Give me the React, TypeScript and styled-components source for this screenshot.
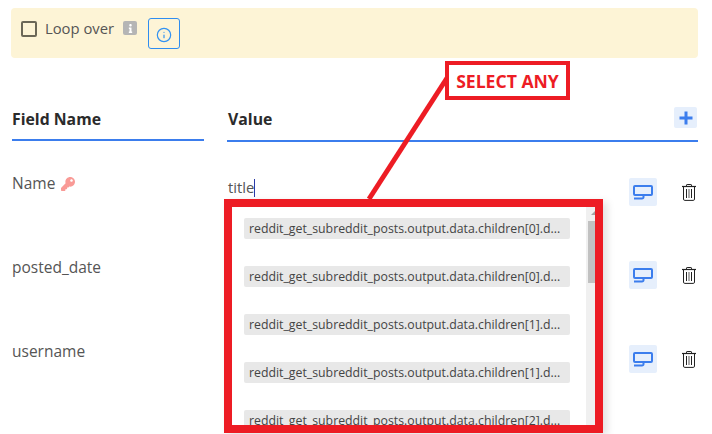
import React from "react";
import styled, { createGlobalStyle } from "styled-components";
import { Info } from "lucide-react";
import { FaKey, FaInfo } from "react-icons/fa";

const RED = "#ed1c24";
const BLUE = "#3b7ded";

const Global = createGlobalStyle`
  html, body { margin: 0; padding: 0; background: #fff; overflow: hidden; }
  body { width: 712px; height: 434px; font-family: "Open Sans", "Noto Sans", sans-serif; color: #444; }
`;

const Page = styled.div`
  position: relative;
  width: 712px;
  height: 434px;
  padding: 8px 14px 0 11px;
  box-sizing: border-box;
  overflow: hidden;
`;

const Banner = styled.div`
  height: 50px;
  background: #fdf4d6;
  border-radius: 4px;
  display: flex;
  align-items: flex-start;
  padding: 10px 0 0 10px;
  box-sizing: border-box;
`;

const CheckBox = styled.span`
  width: 16px;
  height: 16px;
  box-sizing: border-box;
  border: 2px solid #6b6757;
  border-radius: 2px;
  margin-top: 3px;
`;

const LoopLabel = styled.span`
  margin-left: 8px;
  width: 70px;
  font-size: 14.8px;
  line-height: 20px;
  white-space: nowrap;
  color: #555;
`;

const GreyInfo = styled.span`
  width: 14px;
  height: 14px;
  margin: 3px 0 0 8px;
  background: #b5b5b5;
  border-radius: 2px;
  color: #fff;
  display: flex;
  align-items: center;
  justify-content: center;
  font-size: 9px;
`;

const InfoButton = styled.span`
  width: 32px;
  height: 31px;
  box-sizing: border-box;
  margin-left: 11px;
  border: 1px solid #2f8df0;
  border-radius: 3px;
  color: #3292f2;
  display: flex;
  align-items: center;
  justify-content: center;
  padding-top: 2px;
`;

const HeaderRow = styled.div`
  display: grid;
  grid-template-columns: 192px 1fr;
  column-gap: 23px;
  align-items: start;
  margin: 47px 0 0 1px;
`;

const HeaderCell = styled.div<{ $height: number }>`
  height: ${(p) => p.$height}px;
  box-sizing: border-box;
  border-bottom: 2px solid ${BLUE};
  display: flex;
  align-items: flex-start;
  justify-content: space-between;
  font-weight: 700;
  font-size: 15.8px;
  line-height: 24px;
  color: #2b2b2b;
  padding-top: 2px;
`;

const HeaderText = styled.span<{ $indent?: number }>`
  margin-left: ${(p) => p.$indent ?? 0}px;
`;

const PlusButton = styled.span`
  width: 23px;
  height: 21px;
  margin: 0 1px 0 0;
  background: #e6effc;
  border-radius: 2px;
  display: flex;
  align-items: center;
  justify-content: center;
`;

const Row = styled.div<{ $height: number }>`
  display: grid;
  grid-template-columns: 192px 1fr 28px 41px;
  column-gap: 0;
  height: ${(p) => p.$height}px;
  margin-left: 1px;
`;

const FieldName = styled.div<{ $top: number }>`
  font-size: 15.5px;
  line-height: 20px;
  color: #555;
  padding-top: ${(p) => p.$top}px;
  display: flex;
  align-items: flex-start;
  gap: 6px;
`;

const KeyIcon = styled(FaKey)`
  color: #f99a96;
  font-size: 14px;
  margin-top: 4px;
`;

const ValueCell = styled.div`
  padding: 35px 0 0 24px;
  font-size: 14.8px;
  line-height: 20px;
  color: #555;
`;

const Caret = styled.span`
  display: inline-block;
  width: 1px;
  height: 18px;
  background: #2a3aa8;
  vertical-align: -4px;
`;

const ActionButton = styled.span`
  width: 28px;
  height: 28px;
  margin-top: 36px;
  background: #e6effc;
  border-radius: 2px;
  display: flex;
  align-items: center;
  justify-content: center;
`;

const TrashWrap = styled.span`
  margin: 42px 0 0 25px;
  width: 14px;
  height: 17px;
  display: block;
`;

const Dropdown = styled.div`
  position: absolute;
  left: 224px;
  top: 199px;
  width: 379px;
  height: 234px;
  box-sizing: border-box;
  border: 8px solid ${RED};
  background: #fff;
  box-shadow: 4px 3px 8px rgba(0, 0, 0, 0.12);
  display: flex;
  overflow: hidden;
`;

const OptionList = styled.div`
  flex: 1;
  min-width: 0;
  padding: 11px 16px 0 12px;
  display: flex;
  flex-direction: column;
  gap: 27px;
`;

const OptionTag = styled.div`
  flex: none;
  height: 21px;
  background: #e8e8e8;
  border-radius: 2px;
  padding: 0 5px;
  font-size: 12.3px;
  font-weight: 500;
  line-height: 21px;
  color: #444;
  white-space: nowrap;
`;

const ScrollTrack = styled.div`
  flex: none;
  width: 9px;
  background: #f0f0f0;
  padding-left: 2px;
  box-sizing: border-box;
  position: relative;
`;

const ScrollArrow = styled.span`
  position: absolute;
  top: 4px;
  left: 5px;
  border-left: 4px solid transparent;
  border-bottom: 4px solid #a3a3a3;
`;

const ScrollThumb = styled.div`
  margin-top: 14px;
  height: 62px;
  background: #c1c1c1;
`;

const CalloutLine = styled.svg`
  position: absolute;
  left: 360px;
  top: 70px;
  pointer-events: none;
`;

const Callout = styled.div`
  position: absolute;
  left: 445px;
  top: 61px;
  width: 125px;
  height: 39px;
  box-sizing: border-box;
  border: 4px solid ${RED};
  background: #fff;
  color: ${RED};
  font-size: 17.6px;
  font-weight: 700;
  display: flex;
  align-items: center;
  justify-content: center;
  white-space: nowrap;
`;

const TailRect = () => (
  <svg width="20" height="15" viewBox="0 0 20 15" fill="none" stroke={BLUE} strokeWidth="2">
    <path d="M2 1h16a1 1 0 0 1 1 1v7a1 1 0 0 1-1 1H2a1 1 0 0 1-1-1V2a1 1 0 0 1 1-1z" />
    <path d="M10.5 10v2a1.5 1.5 0 0 1-1.5 1.6H1" />
  </svg>
);

const TrashIcon = () => (
  <svg width="14" height="17" viewBox="0 0 14 17" fill="none" stroke="#222" strokeWidth="1">
    <path d="M0 2.5h14" strokeWidth="1.2" />
    <path d="M4.5 2.5V1.1a.6.6 0 0 1 .6-.6h3.8a.6.6 0 0 1 .6.6V2.5" />
    <path d="M1.5 2.5v12.6a1.3 1.3 0 0 0 1.3 1.3h8.4a1.3 1.3 0 0 0 1.3-1.3V2.5" />
    <path d="M4.5 5v9M9.5 5v9" />
    <path d="M7 5v9" stroke="#999" strokeWidth="1.6" />
  </svg>
);

const PlusIcon = () => (
  <svg width="14" height="14" viewBox="0 0 14 14" stroke={BLUE} strokeWidth="3">
    <path d="M0.5 7h13M7 0.5v13" />
  </svg>
);

const rows = [
  { name: "Name", height: 83, nameTop: 31, keyField: true, value: true },
  { name: "posted_date", height: 84, nameTop: 32 },
  { name: "username", height: 84, nameTop: 32 },
];

const options = ["0", "0", "1", "1", "2"];

export default function App() {
  return (
    <Page>
      <Global />
      <Banner>
        <CheckBox />
        <LoopLabel>Loop over</LoopLabel>
        <GreyInfo>
          <FaInfo />
        </GreyInfo>
        <InfoButton>
          <Info size={16} strokeWidth={1.8} />
        </InfoButton>
      </Banner>
      <HeaderRow>
        <HeaderCell $height={36}>Field Name</HeaderCell>
        <HeaderCell $height={37}>
          <HeaderText $indent={1}>Value</HeaderText>
          <PlusButton>
            <PlusIcon />
          </PlusButton>
        </HeaderCell>
      </HeaderRow>
      {rows.map((r) => (
        <Row key={r.name} $height={r.height}>
          <FieldName $top={r.nameTop}>
            {r.name}
            {r.keyField && <KeyIcon />}
          </FieldName>
          <ValueCell>
            {r.value && (
              <>
                title
                <Caret />
              </>
            )}
          </ValueCell>
          <ActionButton>
            <TailRect />
          </ActionButton>
          <TrashWrap>
            <TrashIcon />
          </TrashWrap>
        </Row>
      ))}
      <CalloutLine width="100" height="135" viewBox="0 0 100 135">
        <path d="M87 8 L9 129" stroke={RED} strokeWidth="5" fill="none" />
      </CalloutLine>
      <Callout>SELECT ANY</Callout>
      <Dropdown>
        <OptionList>
          {options.map((n, i) => (
            <OptionTag key={i}>
              {`reddit_get_subreddit_posts.output.data.children[${n}].d...`}
            </OptionTag>
          ))}
        </OptionList>
        <ScrollTrack>
          <ScrollArrow />
          <ScrollThumb />
        </ScrollTrack>
      </Dropdown>
    </Page>
  );
}
